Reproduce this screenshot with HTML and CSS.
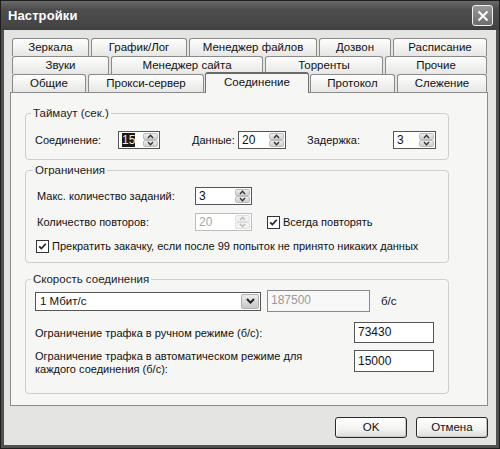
FILE: index.html
```html
<!DOCTYPE html>
<html lang="ru">
<head>
<meta charset="utf-8">
<title>Настройки</title>
<link rel="stylesheet" href="styles.css">
</head>
<body>
<div class="window">
  <div class="titlebar">
    <span class="title">Настройки</span>
    <div class="close"><svg width="12" height="12" viewBox="0 0 12 12"><path d="M1.5 1.5 L10.5 10.5 M10.5 1.5 L1.5 10.5" fill="none" stroke="#fff" stroke-width="2"/></svg></div>
  </div>
  <div class="client">
    <div class="tabs">
      <div class="tabrow row1">
        <div class="tab">Зеркала</div>
        <div class="tab">График/Лог</div>
        <div class="tab">Менеджер файлов</div>
        <div class="tab">Дозвон</div>
        <div class="tab">Расписание</div>
      </div>
      <div class="tabrow row2">
        <div class="tab">Звуки</div>
        <div class="tab">Менеджер сайта</div>
        <div class="tab">Торренты</div>
        <div class="tab">Прочие</div>
      </div>
      <div class="tabrow row3">
        <div class="tab">Общие</div>
        <div class="tab">Прокси-сервер</div>
        <div class="tab active">Соединение</div>
        <div class="tab">Протокол</div>
        <div class="tab">Слежение</div>
      </div>
    </div>
    <div class="panel">
      <fieldset class="group g1">
        <legend>Таймаут (сек.)</legend>
        <div class="row">
          <span class="lbl l-conn">Соединение:</span>
          <div class="spin w42"><span class="val"><span class="sel">15</span></span><span class="spinbtn"><span class="half"><svg width="7" height="5" viewBox="0 0 7 5"><path d="M1 4 L3.5 1.3 L6 4" fill="none" stroke="#333" stroke-width="1.4"/></svg></span><span class="half"><svg width="7" height="5" viewBox="0 0 7 5"><path d="M1 1 L3.5 3.7 L6 1" fill="none" stroke="#333" stroke-width="1.4"/></svg></span></span></div>
          <span class="lbl l-data">Данные:</span>
          <div class="spin w48"><span class="val">20</span><span class="spinbtn"><span class="half"><svg width="7" height="5" viewBox="0 0 7 5"><path d="M1 4 L3.5 1.3 L6 4" fill="none" stroke="#333" stroke-width="1.4"/></svg></span><span class="half"><svg width="7" height="5" viewBox="0 0 7 5"><path d="M1 1 L3.5 3.7 L6 1" fill="none" stroke="#333" stroke-width="1.4"/></svg></span></span></div>
          <span class="lbl l-delay">Задержка:</span>
          <div class="spin w43"><span class="val">3</span><span class="spinbtn"><span class="half"><svg width="7" height="5" viewBox="0 0 7 5"><path d="M1 4 L3.5 1.3 L6 4" fill="none" stroke="#333" stroke-width="1.4"/></svg></span><span class="half"><svg width="7" height="5" viewBox="0 0 7 5"><path d="M1 1 L3.5 3.7 L6 1" fill="none" stroke="#333" stroke-width="1.4"/></svg></span></span></div>
        </div>
      </fieldset>

      <fieldset class="group g2">
        <legend>Ограничения</legend>
        <div class="row">
          <span class="lbl l-lim">Макс. количество заданий:</span>
          <div class="spin w57"><span class="val">3</span><span class="spinbtn"><span class="half"><svg width="7" height="5" viewBox="0 0 7 5"><path d="M1 4 L3.5 1.3 L6 4" fill="none" stroke="#333" stroke-width="1.4"/></svg></span><span class="half"><svg width="7" height="5" viewBox="0 0 7 5"><path d="M1 1 L3.5 3.7 L6 1" fill="none" stroke="#333" stroke-width="1.4"/></svg></span></span></div>
        </div>
        <div class="row r2">
          <span class="lbl l-lim">Количество повторов:</span>
          <div class="spin w57 disabled"><span class="val">20</span><span class="spinbtn"><span class="half"><svg width="7" height="5" viewBox="0 0 7 5"><path d="M1 4 L3.5 1.3 L6 4" fill="none" stroke="#bbb" stroke-width="1.4"/></svg></span><span class="half"><svg width="7" height="5" viewBox="0 0 7 5"><path d="M1 1 L3.5 3.7 L6 1" fill="none" stroke="#bbb" stroke-width="1.4"/></svg></span></span></div>
          <span class="check c-always"><span class="box"><svg width="9" height="9" viewBox="0 0 9 9"><path d="M1.2 4.3 L3.4 6.6 L7.8 1.8" fill="none" stroke="#222" stroke-width="1.7"/></svg></span>Всегда повторять</span>
        </div>
        <div class="row r3">
          <span class="check c-stop"><span class="box"><svg width="9" height="9" viewBox="0 0 9 9"><path d="M1.2 4.3 L3.4 6.6 L7.8 1.8" fill="none" stroke="#222" stroke-width="1.7"/></svg></span>Прекратить закачку, если после 99 попыток не принято никаких данных</span>
        </div>
      </fieldset>

      <fieldset class="group g3">
        <legend>Скорость соединения</legend>
        <div class="row s1">
          <div class="combo"><span class="val">1 Мбит/с</span><span class="arrow"><svg width="9" height="6" viewBox="0 0 9 6"><path d="M1 1 L4.5 4.6 L8 1" fill="none" stroke="#222" stroke-width="2"/></svg></span></div>
          <div class="input dis w103">187500</div>
          <span class="unit">б/с</span>
        </div>
        <div class="row s2">
          <span class="lbl l-traf">Ограничение трафка в ручном режиме (б/с):</span>
          <div class="input w80">73430</div>
        </div>
        <div class="row s3">
          <span class="lbl l-traf two">Ограничение трафка в автоматическом режиме для каждого соединения (б/с):</span>
          <div class="input w80 h22">15000</div>
        </div>
      </fieldset>
    </div>
    <div class="buttons">
      <div class="btn">OK</div>
      <div class="btn">Отмена</div>
    </div>
  </div>
</div>
</body>
</html>
```

FILE: styles.css
```css
html, body {
  margin: 0;
  padding: 0;
  background: #e4e4e2;
}

body {
  font-family: "Liberation Sans", Arial, sans-serif;
  font-size: 11px;
  color: #111;
}

.window {
  width: 500px;
  height: 449px;
  box-sizing: border-box;
  border: 1px solid #1e1e1e;
  background: #505050;
  padding: 0 3px 3px;
  display: flex;
  flex-direction: column;
}

.titlebar {
  height: 29px;
  margin: 0 -3px;
  padding: 0 6px 0 7px;
  background: linear-gradient(#6a6a6a, #4c4c4c 30%, #464646 80%, #3e3e3e);
  display: flex;
  align-items: center;
  justify-content: space-between;
  flex-shrink: 0;
}

.title {
  color: #fff;
  font-weight: bold;
  font-size: 13px;
  letter-spacing: 0.1px;
}

.close {
  width: 21px;
  height: 21px;
  box-sizing: border-box;
  border: 1px solid #f2f2f2;
  border-radius: 3px;
  background: linear-gradient(#9a9a9a, #6c6c6c);
  display: flex;
  align-items: center;
  justify-content: center;
}

.client {
  flex: 1;
  background: #e4e4e2;
  padding: 8px 8px 0 6px;
  display: flex;
  flex-direction: column;
}

.tabs {
  display: flex;
  flex-direction: column;
}

.tabrow {
  display: grid;
  height: 18px;
  column-gap: 2px;
  margin: 0 1px 0 2px;
}

.row1 { grid-template-columns: 77px 96px 128px 72px 94px; }
.row2 { grid-template-columns: 97px 152px 118px 102px; }
.row3 { grid-template-columns: 74px 116px 102px 85px 90px; }

.tab {
  height: 18px;
  box-sizing: border-box;
  border: 1px solid #8a8a8a;
  border-bottom: none;
  border-radius: 3px 3px 0 0;
  background: linear-gradient(#fefefe, #f0f0ee 60%, #e6e6e4);
  text-align: center;
  line-height: 17px;
  font-size: 11.5px;
  color: #111;
  white-space: nowrap;
}

.tab.active {
  margin: -2px -1px 0;
  height: 21px;
  background: #f6f6f4;
  border-color: #707070;
  border-top: 2px solid #6a6a6a;
  line-height: 17px;
  position: relative;
  z-index: 1;
}

.panel {
  height: 314px;
  box-sizing: border-box;
  border: 1px solid #8c8c8c;
  background: #f6f6f4;
  padding: 13px 38px 0 14px;
}

.group {
  margin: 0;
  box-sizing: border-box;
  border: 1px solid #cfcfc8;
  border-radius: 4px;
  min-width: 0;
}

.group legend {
  padding: 0 2px;
  margin-left: -4px;
  line-height: 14px;
  font-size: 11.5px;
  color: #222;
}

.g1 { height: 54px; padding: 11px 0 0 9px; }
.g2 { height: 100px; margin-top: 3px; padding: 10px 0 0 11px; }
.g3 { height: 122px; margin-top: 9px; padding: 4px 0 0 9px; }

.row {
  display: flex;
  align-items: center;
}

.lbl { white-space: nowrap; }
.l-conn { width: 83px; }
.l-data { width: 46px; margin-left: 32px; }
.l-delay { width: 86px; margin-left: 21px; }
.l-lim { width: 158px; }
.l-traf { width: 319px; }
.lbl.two { white-space: normal; line-height: 13px; width: 290px; margin-right: 29px; }

.spin {
  height: 18px;
  box-sizing: border-box;
  border: 1px solid #555;
  background: #fff;
  display: flex;
  align-items: stretch;
  padding: 1px;
}
.w42 { width: 42px; }
.w48 { width: 48px; }
.w43 { width: 43px; }
.w57 { width: 57px; }

.spin .val {
  flex: 1;
  line-height: 14px;
  padding-left: 2px;
  font-size: 12px;
}

.sel {
  background: #1a1a1a;
  color: #e8e8e8;
}

.spinbtn {
  width: 15px;
  display: flex;
  flex-direction: column;
}

.half {
  flex: 1;
  display: flex;
  align-items: center;
  justify-content: center;
  background: linear-gradient(#eeeeee, #cfcfcf);
  border: 1px solid #bdbdbd;
  border-radius: 2px;
}

.spin.disabled { border-color: #bdbdbd; }
.spin.disabled .val { color: #a8a8a8; }
.spin.disabled .half { background: #f2f2f2; border-color: #dedede; }

.r2 { margin-top: 8px; }
.r3 { margin-top: 6px; height: 18px; }

.check {
  display: flex;
  align-items: center;
  white-space: nowrap;
}

.check .box {
  width: 13px;
  height: 13px;
  box-sizing: border-box;
  border: 1px solid #333;
  background: #fff;
  display: flex;
  align-items: center;
  justify-content: center;
  margin-right: 3px;
}

.c-always { margin-left: 15px; }
.c-stop { margin-left: -1px; }

.s1 { height: 22px; }
.s2 { margin-top: 10px; }
.s3 { margin-top: 7px; align-items: flex-start; }

.combo {
  width: 226px;
  height: 19px;
  box-sizing: border-box;
  border: 1px solid #555;
  background: #fff;
  display: flex;
  align-items: stretch;
  padding: 1px;
}

.combo .val {
  flex: 1;
  padding-left: 3px;
  line-height: 15px;
  font-size: 11.5px;
}

.combo .arrow {
  width: 16px;
  background: linear-gradient(#ececec, #c8c8c8);
  border: 1px solid #b0b0b0;
  border-radius: 2px;
  display: flex;
  align-items: center;
  justify-content: center;
}

.input {
  height: 21px;
  box-sizing: border-box;
  border: 1px solid #555;
  background: #fff;
  padding-left: 3px;
  line-height: 19px;
  font-size: 12px;
}

.input.dis {
  height: 22px;
  margin-left: 6px;
  border-color: #8a8a8a;
  color: #9a9a9a;
  background: #f8f8f8;
}

.w103 { width: 103px; }
.w80 { width: 80px; }
.h22 { height: 22px; line-height: 20px; }

.unit { margin-left: 11px; font-size: 11.5px; }

.buttons {
  display: flex;
  justify-content: flex-end;
  gap: 9px;
  margin-top: 11px;
}

.btn {
  width: 72px;
  height: 21px;
  box-sizing: border-box;
  border: 1px solid #2a2a2a;
  border-radius: 3px;
  background: linear-gradient(#ffffff, #f2f2f0 60%, #dcdcda);
  box-shadow: inset -1px -1px 0 #c8c8c8, inset 1px 1px 0 #ffffff;
  text-align: center;
  line-height: 19px;
  font-size: 11.5px;
}
```
